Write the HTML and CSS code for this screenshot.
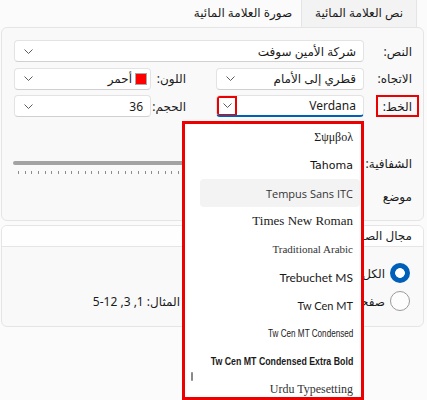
FILE: index.html
```html
<!DOCTYPE html>
<html lang="ar" dir="rtl">
<head>
<meta charset="utf-8">
<title>العلامة المائية</title>
<link rel="stylesheet" href="styles.css">
</head>
<body>
<div class="tabs">
  <div class="tab active">نص العلامة المائية</div>
  <div class="tab">صورة العلامة المائية</div>
</div>

<div class="panel main">
  <div class="grid">
    <div class="lbl">النص:</div>
    <div class="combo span3"><span>شركة الأمين سوفت</span><svg class="chev" viewBox="0 0 9 5"><path d="M0.5 0.5 L4.5 4.5 L8.5 0.5"/></svg></div>

    <div class="lbl">الاتجاه:</div>
    <div class="combo"><span>قطري إلى الأمام</span><svg class="chev" viewBox="0 0 9 5"><path d="M0.5 0.5 L4.5 4.5 L8.5 0.5"/></svg></div>
    <div class="lbl lbl2">اللون:</div>
    <div class="combo"><span class="swatch"></span><span>أحمر</span><svg class="chev" viewBox="0 0 9 5"><path d="M0.5 0.5 L4.5 4.5 L8.5 0.5"/></svg></div>

    <div class="lbl"><span class="annot">الخط:</span></div>
    <div class="combo focus"><span class="latin">Verdana</span><span class="chevbox"><svg class="chev2" viewBox="0 0 9 5"><path d="M0.5 0.5 L4.5 4.5 L8.5 0.5"/></svg></span></div>
    <div class="lbl lbl2">الحجم:</div>
    <div class="combo"><span class="latin">36</span><svg class="chev" viewBox="0 0 9 5"><path d="M0.5 0.5 L4.5 4.5 L8.5 0.5"/></svg></div>
  </div>

  <div class="row slider-row">
    <div class="lbl">الشفافية:</div>
    <div class="slider">
      <div class="track"></div>
      <div class="ticks"></div>
    </div>
  </div>
  <div class="row pos-row">
    <div class="lbl">موضع</div>
  </div>
</div>

<div class="panel range">
  <div class="range-head">مجال الصفحة</div>
  <div class="range-body">
    <div class="radio-row"><span class="radio on"></span><span>الكل</span></div>
    <div class="radio-row second"><span class="radio"></span><span class="pages-lbl">صفحات:</span><span class="hint">المثال: 1, 3, 12-5</span></div>
  </div>
</div>

<div class="dropdown">
  <div class="list">
    <div class="item f-symbol">Σψμβολ</div>
    <div class="item f-tahoma">Tahoma</div>
    <div class="item hover f-tempus">Tempus Sans ITC</div>
    <div class="item f-times">Times New Roman</div>
    <div class="item f-trad">Traditional Arabic</div>
    <div class="item f-treb">Trebuchet MS</div>
    <div class="item f-tw">Tw Cen MT</div>
    <div class="item f-twc"><span class="squeeze c1">Tw Cen MT Condensed</span></div>
    <div class="item f-twb"><span class="squeeze c2">Tw Cen MT Condensed Extra Bold</span></div>
    <div class="item f-urdu">Urdu Typesetting</div>
  </div>
  <div class="scroll"></div>
</div>
</body>
</html>
```

FILE: styles.css
```css
html, body {
  margin: 0;
  padding: 0;
}
body {
  width: 427px;
  height: 400px;
  overflow: hidden;
  position: relative;
  background: #fbfbfb;
  color: #1b1b1b;
  font-family: "Segoe UI", "Noto Sans", "DejaVu Sans", sans-serif;
  font-size: 12px;
  direction: rtl;
}

/* tabs */
.tabs {
  display: flex;
  height: 27px;
  padding-right: 10px;
}
.tab {
  width: 114px;
  text-align: center;
  line-height: 26px;
  border-left: 1px solid transparent;
  border-right: 1px solid transparent;
}
.tab.active {
  background: #f3f3f3;
  border-left-color: #e5e5e5;
  border-right-color: #e5e5e5;
}

/* panels */
.panel {
  margin: 0 3px 0 1px;
  background: #f9f9f9;
  border: 1px solid #e5e5e5;
  border-radius: 6px;
}
.main {
  padding: 12px 11px 12px 12px;
}
.grid {
  display: grid;
  grid-template-columns: 48px 148px 65px 137px;
  grid-template-rows: 22px 22px 22px;
  row-gap: 5.5px;
}
.lbl {
  display: flex;
  align-items: center;
  white-space: nowrap;
}
.lbl2 {
  padding-right: 30px;
}
.combo {
  display: flex;
  align-items: center;
  box-sizing: border-box;
  background: #fff;
  border: 1px solid #e3e3e3;
  border-bottom-color: #d0d0d0;
  border-radius: 4px;
  padding: 0 7px 0 9px;
  white-space: nowrap;
  overflow: hidden;
}
.span3 {
  grid-column: 2 / 5;
}
.latin {
  font-family: "Noto Sans", "Open Sans", sans-serif;
}
.chev, .chev2 {
  width: 9px;
  height: 5px;
  fill: none;
  stroke: #5c5c5c;
  stroke-width: 1;
}
.chev {
  margin-right: auto;
}
.focus {
  border-bottom: 2px solid #005fb8;
}
.chevbox {
  margin-right: auto;
  margin-left: -9px;
  width: 20px;
  height: 20px;
  box-sizing: border-box;
  border: 2px solid #ec0000;
  display: flex;
  align-items: center;
  justify-content: center;
}
.swatch {
  width: 12px;
  height: 12px;
  box-sizing: border-box;
  background: #ff0000;
  border: 1px solid #a8a8a8;
  margin-right: -4px;
  margin-left: 3px;
}
.annot {
  display: flex;
  align-items: center;
  height: 22px;
  box-sizing: border-box;
  border: 2px solid #ec0000;
  padding: 0 5px;
  margin-right: -7px;
}

/* slider */
.row {
  display: flex;
  height: 24px;
}
.row .lbl {
  width: 48px;
}
.slider-row {
  margin-top: 34px;
}
.slider {
  width: 350px;
}
.track {
  margin-top: 10px;
  margin-left: -1px;
  height: 4px;
  border-radius: 2px;
  background: #a3a3a3;
}
.ticks {
  margin-top: 6px;
  margin-left: 4px;
  height: 3px;
  background: repeating-linear-gradient(to right, #8c8c8c 0 1px, transparent 1px 6.67px);
}
.pos-row {
  margin-top: 9px;
}

/* page range */
.range {
  margin-top: 4px;
  overflow: hidden;
}
.range-head {
  height: 20px;
  line-height: 20px;
  background: #fefefe;
  border-bottom: 1px solid #e5e5e5;
  padding-right: 11px;
}
.range-body {
  padding: 16px 13px 15px;
}
.radio-row {
  display: flex;
  align-items: center;
  gap: 5px;
  height: 20px;
}
.radio-row.second {
  margin-top: 8px;
}
.radio {
  width: 20px;
  height: 20px;
  box-sizing: border-box;
  border-radius: 50%;
  border: 1px solid #9a9a9a;
  background: #fdfdfd;
  flex: none;
}
.radio.on {
  border: none;
  background: radial-gradient(circle, #ffffff 0 4.5px, #005fb8 5.2px);
}
.pages-lbl {
  width: 200px;
}
.hint {
  white-space: nowrap;
}

/* dropdown popup */
.dropdown {
  position: absolute;
  top: 121px;
  left: 182px;
  width: 182px;
  height: 279px;
  box-sizing: border-box;
  border: 3px solid #ec0000;
  background: #fff;
  overflow: hidden;
  direction: rtl;
}
.list {
  margin-top: -1px;
}
.item {
  height: 28px;
  display: flex;
  align-items: center;
  margin: 0 1px 0 15px;
  padding-right: 7px;
  border-radius: 4px;
  white-space: nowrap;
  color: #1a1a1a;
  direction: ltr;
  justify-content: flex-end;
}
.item.hover {
  background: #f3f3f3;
}
.f-symbol { font-family: "Liberation Serif", serif; font-size: 12px; }
.f-tahoma { font-family: "DejaVu Sans", sans-serif; font-size: 11px; color: #111; }
.f-tempus { font-family: "Open Sans", sans-serif; font-size: 11px; color: #333; }
.f-times { font-family: "Liberation Serif", serif; font-size: 13px; }
.f-trad { font-family: "Liberation Serif", serif; font-size: 11px; color: #333; }
.f-treb { font-family: "Lato", sans-serif; font-size: 12px; }
.f-tw { font-family: "Lato", sans-serif; font-size: 11px; }
.f-twc { font-family: "Liberation Sans", sans-serif; font-size: 11px; }
.f-twb { font-family: "Liberation Sans", sans-serif; font-size: 11px; font-weight: bold; }
.f-urdu { font-family: "Liberation Serif", serif; font-size: 12px; color: #333; }
.squeeze {
  display: inline-block;
  transform-origin: right center;
}
.c1 { transform: scaleX(0.74); }
.c2 { transform: scaleX(0.8); }
.scroll {
  position: absolute;
  left: 6px;
  top: 248px;
  width: 2px;
  height: 9px;
  background: #8a8a8a;
  border-radius: 1px;
}
```
